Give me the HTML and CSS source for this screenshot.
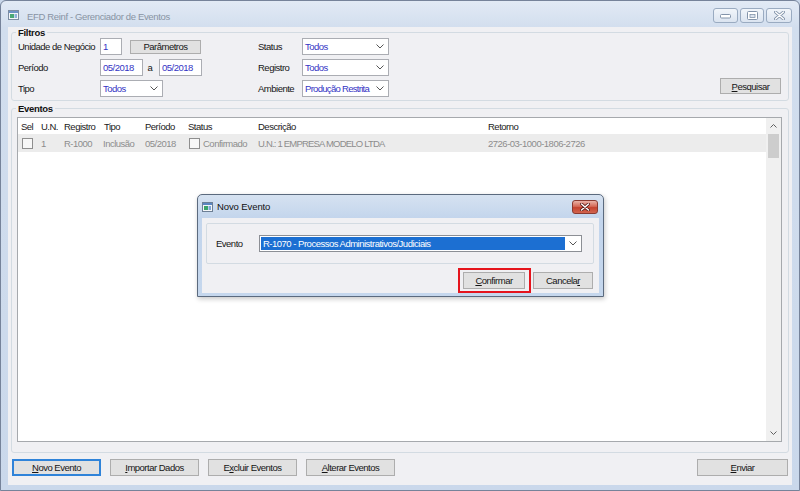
FILE: index.html
```html
<!DOCTYPE html>
<html lang="pt-BR">
<head>
<meta charset="utf-8">
<title>EFD Reinf - Gerenciador de Eventos</title>
<link rel="stylesheet" href="styles.css">
</head>
<body>
<div class="window">
  <div class="titlebar">
    <svg class="app-icon" width="11" height="10" viewBox="0 0 11 10"><rect x="0.5" y="0.5" width="10" height="9" fill="#f4f6f8" stroke="#7d8da2"/><rect x="1" y="1" width="9" height="2" fill="#6f93c6"/><rect x="2" y="4" width="4" height="4" fill="#4aa877"/><rect x="6.5" y="4" width="2.5" height="4" fill="#8fb0da"/></svg>
    <span class="title">EFD Reinf - Gerenciador de Eventos</span>
    <div class="caption-btns">
      <span class="cbtn cb-min"><svg width="11" height="5" viewBox="0 0 11 5"><rect x="0.5" y="0.5" width="10" height="3.5" rx="1" fill="#fff" stroke="#8394aa"/></svg></span>
      <span class="cbtn cb-max"><svg width="11" height="9" viewBox="0 0 11 9"><rect x="0.5" y="0.5" width="10" height="8" rx="1" fill="#fff" stroke="#8394aa"/><rect x="3" y="3.5" width="5" height="3" fill="#dbe3ee" stroke="#8394aa" stroke-width="0.8"/></svg></span>
      <span class="cbtn cb-close"><svg width="11" height="9" viewBox="0 0 11 9"><path d="M1.5 1 L9.5 8 M9.5 1 L1.5 8" stroke="#8394aa" stroke-width="3" stroke-linecap="round"/><path d="M1.5 1 L9.5 8 M9.5 1 L1.5 8" stroke="#fff" stroke-width="1.4" stroke-linecap="round"/></svg></span>
    </div>
  </div>

  <div class="client">
    <fieldset class="group filtros">
      <legend>Filtros</legend>
      <div class="filtros-body">
        <div class="fcol">
          <div class="frow"><span class="lbl lbl1">Unidade de Negócio</span><span class="input w-un">1</span><button class="btn btn-param">Parâmetros</button></div>
          <div class="frow"><span class="lbl lbl1">Período</span><span class="input w-per">05/2018</span><span class="sep">a</span><span class="input w-per">05/2018</span></div>
          <div class="frow"><span class="lbl lbl1">Tipo</span><span class="select w-tipo">Todos<svg width="8" height="5" viewBox="0 0 8 5"><path d="M0.5 0.5 L4 4 L7.5 0.5" fill="none" stroke="#555" stroke-width="1"/></svg></span></div>
        </div>
        <div class="fcol">
          <div class="frow"><span class="lbl lbl2">Status</span><span class="select w-sel2">Todos<svg width="8" height="5" viewBox="0 0 8 5"><path d="M0.5 0.5 L4 4 L7.5 0.5" fill="none" stroke="#555" stroke-width="1"/></svg></span></div>
          <div class="frow"><span class="lbl lbl2">Registro</span><span class="select w-sel2">Todos<svg width="8" height="5" viewBox="0 0 8 5"><path d="M0.5 0.5 L4 4 L7.5 0.5" fill="none" stroke="#555" stroke-width="1"/></svg></span></div>
          <div class="frow"><span class="lbl lbl2">Ambiente</span><span class="select w-sel2 tight">Produção Restrita<svg width="8" height="5" viewBox="0 0 8 5"><path d="M0.5 0.5 L4 4 L7.5 0.5" fill="none" stroke="#555" stroke-width="1"/></svg></span></div>
        </div>
        <div class="fcol fcol3">
          <button class="btn btn-pesq"><u>P</u>esquisar</button>
        </div>
      </div>
    </fieldset>

    <fieldset class="group eventos">
      <legend>Eventos</legend>
      <div class="listview">
        <div class="lv-main">
          <div class="lv-row lv-head">
            <span>Sel</span><span>U.N.</span><span>Registro</span><span>Tipo</span><span>Período</span><span>Status</span><span>Descrição</span><span>Retorno</span>
          </div>
          <div class="lv-row lv-data">
            <span class="c-sel"><i class="cb"></i></span><span>1</span><span>R-1000</span><span class="c-tipo">Inclusão</span><span>05/2018</span><span class="c-status"><i class="cb"></i>Confirmado</span><span class="c-desc">U.N.: 1 EMPRESA MODELO LTDA</span><span>2726-03-1000-1806-2726</span>
          </div>
        </div>
        <div class="vscroll">
          <span class="arrow"><svg width="7" height="4" viewBox="0 0 7 4"><path d="M0.5 3.5 L3.5 0.5 L6.5 3.5" fill="none" stroke="#606060"/></svg></span>
          <span class="thumb"></span>
          <span class="track"></span>
          <span class="arrow"><svg width="7" height="4" viewBox="0 0 7 4"><path d="M0.5 0.5 L3.5 3.5 L6.5 0.5" fill="none" stroke="#606060"/></svg></span>
        </div>
      </div>
    </fieldset>

    <div class="actions">
      <button class="btn btn-act focused"><u>N</u>ovo Evento</button>
      <button class="btn btn-act"><u>I</u>mportar Dados</button>
      <button class="btn btn-act">E<u>x</u>cluir Eventos</button>
      <button class="btn btn-act"><u>A</u>lterar Eventos</button>
      <button class="btn btn-enviar"><u>E</u>nviar</button>
    </div>
  </div>

  <div class="dialog">
    <div class="dlg-title">
      <svg class="dlg-icon" width="11" height="10" viewBox="0 0 11 10"><rect x="0.5" y="0.5" width="10" height="9" fill="#f4f6f8" stroke="#6d7f95"/><rect x="1" y="1" width="9" height="2" fill="#5b86c1"/><rect x="2" y="4" width="4" height="4" fill="#3aa36b"/><rect x="6.5" y="4" width="2.5" height="4" fill="#7fa6d6"/></svg>
      <span class="dlg-text">Novo Evento</span>
      <span class="dlg-close"><svg width="10" height="8" viewBox="0 0 10 8"><path d="M1.5 1 L8.5 7 M8.5 1 L1.5 7" stroke="#5a1d18" stroke-width="3" stroke-linecap="round"/><path d="M1.5 1 L8.5 7 M8.5 1 L1.5 7" stroke="#fff" stroke-width="1.5" stroke-linecap="round"/></svg></span>
    </div>
    <div class="dlg-client">
      <div class="dlg-panel">
        <span class="dlg-lbl">Evento</span>
        <span class="dlg-select"><span class="hl">R-1070 - Processos Administrativos/Judiciais</span><span class="dd"><svg width="8" height="5" viewBox="0 0 8 5"><path d="M0.5 0.5 L4 4 L7.5 0.5" fill="none" stroke="#555" stroke-width="1"/></svg></span></span>
      </div>
      <div class="dlg-actions">
        <span class="mark"><button class="btn btn-conf"><u>C</u>onfirmar</button></span>
        <button class="btn btn-canc">Cancela<u>r</u></button>
      </div>
    </div>
  </div>
</div>
</body>
</html>
```
FILE: styles.css
```css
* { box-sizing: border-box; }

body {
  margin: 0;
  font-family: "Liberation Sans", Arial, sans-serif;
  font-size: 9.5px;
  letter-spacing: -0.5px;
  color: #151515;
  background: #c9d7ea;
}

.window {
  width: 800px;
  height: 491px;
  border: 1px solid #76839a;
  border-radius: 6px 6px 0 0;
  background: linear-gradient(180deg, #e2eaf5 0, #d2deee 27px, #cad8eb 100%);
  display: flex;
  flex-direction: column;
  position: relative;
  overflow: hidden;
}

.titlebar {
  height: 26px;
  flex: none;
  display: flex;
  align-items: center;
  padding: 0 6px;
}

.app-icon { margin: 1px 8px 0 1px; flex: none; }

.title {
  font-size: 9.5px;
  letter-spacing: -0.35px;
  color: #8893a3;
  padding-top: 4px;
}

.caption-btns {
  margin-left: auto;
  display: flex;
  gap: 2px;
  align-self: flex-start;
  margin-top: 7px;
  margin-right: 1px;
}

.cbtn {
  height: 15px;
  border: 1px solid #9aabc1;
  border-radius: 3px;
  background: linear-gradient(#f1f5fa, #dbe4f0);
  display: flex;
  align-items: center;
  justify-content: center;
}
.cb-min { width: 25px; align-items: flex-end; padding-bottom: 3px; }
.cb-max { width: 24px; }
.cb-close { width: 26px; }

.client {
  flex: 1;
  margin: 0 7px 5px;
  background: #f0f0f3;
  display: flex;
  flex-direction: column;
  padding: 0 3px 9px;
  min-height: 0;
}

.group {
  border: 1px solid #d3dbe2;
  border-radius: 3px;
  margin: 0;
  min-width: 0;
}

legend {
  font-weight: bold;
  font-size: 9.5px;
  letter-spacing: -0.3px;
  line-height: 11px;
  padding: 0 2px;
  color: #111;
}

.filtros { padding: 0 7px 3px 6px; }
.filtros legend { margin-left: -2px; }

.filtros-body {
  display: grid;
  grid-template-columns: 240px 131px 1fr;
}

.fcol {
  display: flex;
  flex-direction: column;
  gap: 4px;
}

.fcol3 {
  align-items: flex-end;
  justify-content: flex-end;
  padding-bottom: 3px;
}

.frow {
  height: 17px;
  display: flex;
  align-items: center;
}

.lbl { flex: none; }
.lbl1 { width: 82px; }
.lbl2 { width: 44px; }

.input, .select {
  height: 17px;
  border: 1px solid #abadb3;
  background: #fff;
  display: flex;
  align-items: center;
  color: #3434c4;
  padding-left: 2px;
  white-space: nowrap;
}
.select {
  justify-content: space-between;
  padding-right: 4px;
}
.select svg { flex: none; }
.select.tight { letter-spacing: -0.7px; }

.w-un { width: 22px; }
.w-per { width: 43px; }
.w-tipo { width: 63px; }
.w-sel2 { width: 88px; }

.sep {
  width: 16px;
  text-align: center;
  padding-right: 2px;
}

.btn {
  height: 17px;
  border: 1px solid #adadad;
  background: #e1e1e1;
  font: inherit;
  letter-spacing: inherit;
  color: #151515;
  padding: 0;
  display: flex;
  align-items: center;
  justify-content: center;
  white-space: nowrap;
}
.btn u { text-decoration-thickness: 1px; text-underline-offset: 1px; }

.btn-param {
  width: 71px;
  height: 14px;
  margin-left: 8px;
}

.btn-pesq { width: 61px; height: 16px; }

.eventos {
  flex: 1;
  margin-top: 2px;
  padding: 3px 6px 10px 5px;
  display: flex;
  flex-direction: column;
  min-height: 0;
}
.eventos legend { margin-left: -1px; }

.listview {
  flex: 1;
  display: flex;
  border: 1px solid #a6a9ad;
  background: #fff;
  min-height: 0;
}

.lv-main { flex: 1; min-width: 0; }

.lv-row {
  display: grid;
  grid-template-columns: 20px 23px 40px 41px 43px 70px 230px 1fr;
  align-items: center;
}
.lv-row > span {
  padding-left: 3px;
  white-space: nowrap;
  overflow: hidden;
}

.lv-head { height: 16px; color: #1a1a1a; }

.lv-data {
  height: 18px;
  background: #ececec;
  color: #8c8c8c;
}
.lv-data > .c-sel { padding-left: 4px; display: flex; align-items: center; }
.lv-data > .c-tipo { padding-left: 2px; }
.lv-data > .c-status { padding-left: 4px; display: flex; align-items: center; gap: 3px; }
.lv-data > .c-desc { letter-spacing: -0.8px; }

.cb {
  width: 11px;
  height: 11px;
  border: 1px solid #8e8e8e;
  background: #f7f7f7;
  display: inline-block;
  flex: none;
}

.vscroll {
  width: 15px;
  flex: none;
  background: #f0f0f0;
  display: flex;
  flex-direction: column;
  align-items: center;
}
.vscroll .arrow {
  height: 16px;
  display: flex;
  align-items: center;
  justify-content: center;
  flex: none;
}
.vscroll .thumb {
  width: 11px;
  height: 24px;
  background: #cdcdcd;
  flex: none;
}
.vscroll .track { flex: 1; }

.actions {
  display: flex;
  gap: 9px;
  margin-top: 6px;
  padding: 0 1px;
}
.btn-act { width: 89px; }
.btn-enviar { width: 91px; margin-left: auto; }
.focused {
  border-color: #2f83d9;
  box-shadow: inset 0 0 0 1px #2f83d9;
}

/* dialog floating above the main window */
.dialog {
  position: absolute;
  left: 196px;
  top: 193px;
  width: 407px;
  border: 1px solid #5b6a7e;
  border-radius: 5px 5px 0 0;
  background: linear-gradient(180deg, #d6e2f1 0, #c3d5ec 23px, #c5d7ed 100%);
  box-shadow: 1px 2px 5px rgba(0, 0, 0, 0.22);
  display: flex;
  flex-direction: column;
}

.dlg-title {
  height: 23px;
  display: flex;
  align-items: center;
  padding: 0 5px 0 4px;
}
.dlg-icon { flex: none; margin-right: 4px; }
.dlg-text { font-size: 9.5px; color: #111; letter-spacing: -0.1px; }
.dlg-close {
  margin-left: auto;
  width: 26px;
  height: 14px;
  border: 1px solid #8a3a31;
  border-radius: 3px;
  background: linear-gradient(#eab2a6, #d56a58 45%, #c4432f 55%, #d2654f);
  display: flex;
  align-items: center;
  justify-content: center;
}

.dlg-client {
  margin: 0 4px 3px;
  background: #f0f0f3;
  padding: 5px 5px 0 4px;
  display: flex;
  flex-direction: column;
}

.dlg-panel {
  height: 41px;
  border: 1px solid #d3dbe2;
  border-radius: 2px;
  display: flex;
  align-items: center;
  padding-left: 9px;
}
.dlg-lbl { width: 43px; flex: none; }

.dlg-select {
  width: 323px;
  height: 17px;
  border: 1px solid #8c8f95;
  background: #fff;
  display: flex;
  align-items: center;
  padding: 1px;
}
.hl {
  flex: 1;
  height: 13px;
  background: #1c6fd2;
  color: #fff;
  padding-left: 2px;
  display: flex;
  align-items: center;
  white-space: nowrap;
}
.dd {
  width: 15px;
  display: flex;
  align-items: center;
  justify-content: center;
}

.dlg-actions {
  display: flex;
  justify-content: flex-end;
  align-items: center;
  gap: 2px;
  margin-top: 4px;
  padding-right: 1px;
}

.mark {
  border: 2px solid #e5141c;
  padding: 2px 4px 2px 3px;
  display: flex;
}
.btn-conf { width: 62px; }
.btn-canc { width: 60px; }
```
